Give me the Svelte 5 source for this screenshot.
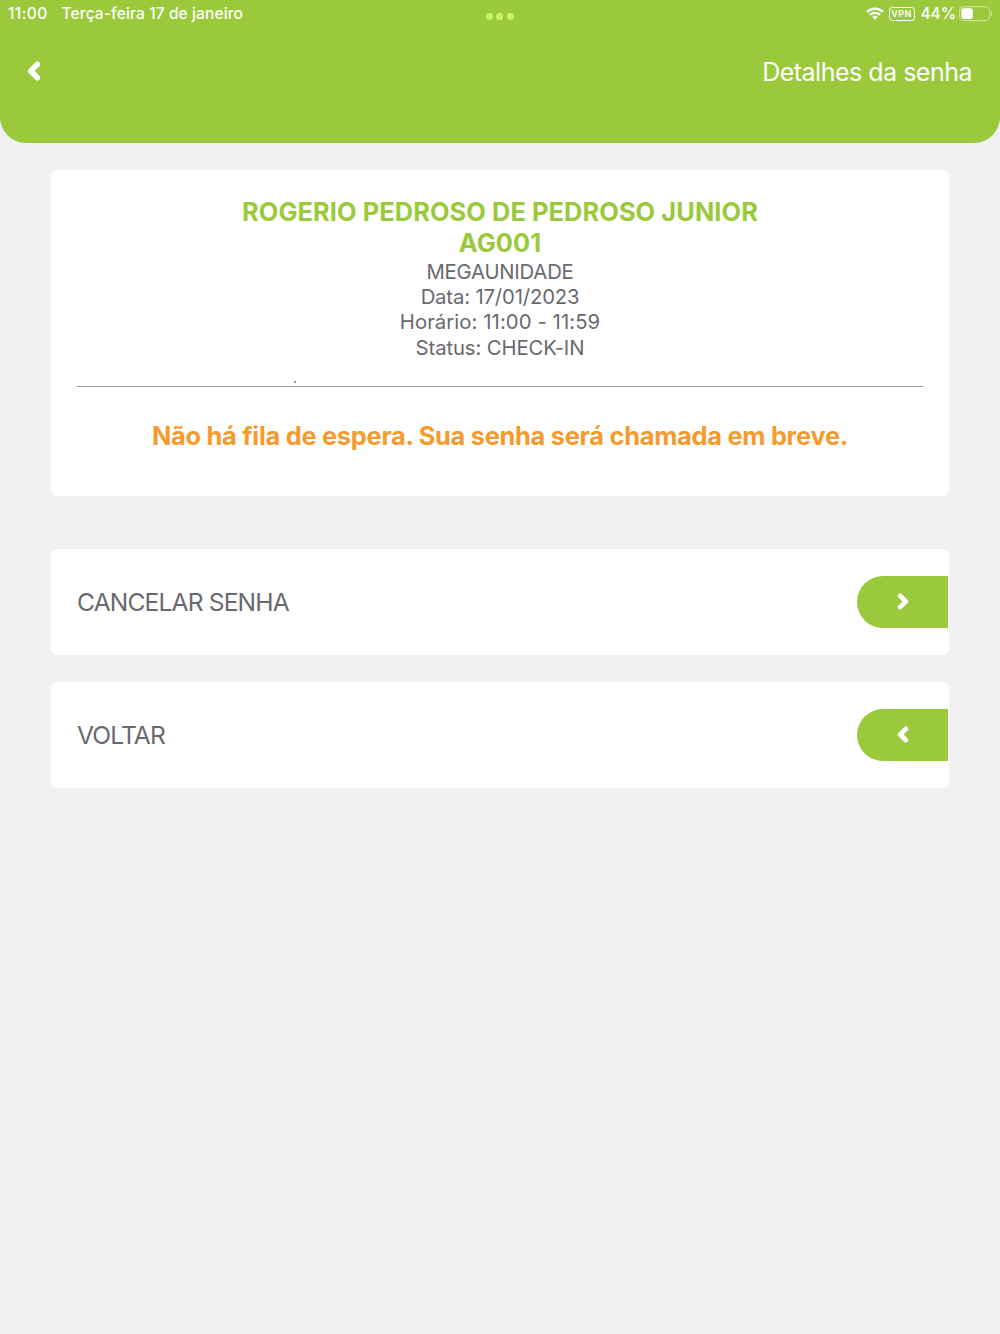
<script>
    let ticket = {
        name: 'ROGERIO PEDROSO DE PEDROSO JUNIOR',
        code: 'AG001',
        lines: [
            { text: 'MEGAUNIDADE', spacing: -0.2 },
            { text: 'Data: 17/01/2023', spacing: -0.15 },
            { text: 'Horário: 11:00 - 11:59', spacing: 0.08 },
            { text: 'Status: CHECK-IN', spacing: -0.1 }
        ]
    };

    let actions = [
        { id: 'cancel', label: 'CANCELAR SENHA', direction: 'right' },
        { id: 'back', label: 'VOLTAR', direction: 'left' }
    ];
</script>

<svelte:head>
    <title>Detalhes da senha</title>
</svelte:head>

{#snippet chevron(direction)}
    <svg class="chevron" viewBox="0 0 14 20" fill="none" stroke="#fff" stroke-width="5.5" stroke-linecap="round" stroke-linejoin="round">
        {#if direction === 'left'}
            <path d="M10.4 3.3 L3.7 10 L10.4 16.7" />
        {:else}
            <path d="M3.6 3.3 L10.3 10 L3.6 16.7" />
        {/if}
    </svg>
{/snippet}

<div class="screen">
    <header>
        <div class="status-bar">
            <div class="side">
                <span class="time">11:00</span>
                <span class="date">Terça-feira 17 de janeiro</span>
            </div>
            <div class="dots"><i></i><i></i><i></i></div>
            <div class="side right">
                <svg class="wifi" width="18" height="13" viewBox="0 0 18 13" fill="none" stroke="#fff" stroke-width="2.3">
                    <path d="M1 4.9 A11.4 11.4 0 0 1 17 4.9" />
                    <path d="M3.9 7.9 A7.3 7.3 0 0 1 14.1 7.9" />
                    <path d="M9 12.8 L6.3 10.1 A3.9 3.9 0 0 1 11.7 10.1 Z" fill="#fff" stroke="none" />
                </svg>
                <span class="vpn">VPN</span>
                <span class="percent">44%</span>
                <svg class="battery" width="34" height="16" viewBox="0 0 34 16">
                    <rect x="0.6" y="0.6" width="30" height="14" rx="4.2" fill="none" stroke="#fff" stroke-opacity="0.45" stroke-width="1.1" />
                    <rect x="2.3" y="2.3" width="11.6" height="10.6" rx="2.4" fill="#fff" />
                    <path d="M31.9 5.2 C34 6 34 9.2 31.9 10 Z" fill="#fff" fill-opacity="0.5" />
                </svg>
            </div>
        </div>
        <nav>
            <button class="back" aria-label="Voltar">{@render chevron('left')}</button>
            <h1>Detalhes da senha</h1>
        </nav>
    </header>

    <main>
        <section class="card ticket">
            <h2>{ticket.name}</h2>
            <h2>{ticket.code}</h2>
            {#each ticket.lines as line}
                <p style="letter-spacing: {line.spacing}px">{line.text}</p>
            {/each}
            <div class="divider"><i class="speck"></i></div>
            <strong>Não há fila de espera. Sua senha será chamada em breve.</strong>
        </section>

        {#each actions as action (action.id)}
            <div class="card action">
                <span>{action.label}</span>
                <button class="pill" aria-label={action.label}>{@render chevron(action.direction)}</button>
            </div>
        {/each}
    </main>
</div>

<style>
    :global(body) {
        background: #f1f1f1;
    }

    .screen {
        min-height: 1334px;
        background: #f1f1f1;
        color: #69696e;
        font-family: Inter, "Liberation Sans", sans-serif;
    }

    h1, h2, p {
        margin: 0;
        font-weight: 400;
    }

    button {
        display: flex;
        align-items: center;
        justify-content: center;
        padding: 0;
        border: 0;
        background: none;
    }

    header {
        height: 143px;
        box-sizing: border-box;
        background: #9aca3c;
        border-radius: 0 0 26px 26px;
        color: #fff;
    }

    .status-bar {
        display: flex;
        align-items: center;
        height: 27px;
        padding: 0 7px 0 8px;
        font-size: 15.5px;
        font-weight: 500;
    }

    .side {
        display: flex;
        flex: 1;
        align-items: center;
        white-space: nowrap;
    }

    .right {
        justify-content: flex-end;
    }

    .time {
        letter-spacing: 0.4px;
    }

    .date {
        margin-left: 14px;
        letter-spacing: 0.12px;
    }

    .dots {
        display: flex;
        gap: 3.5px;
        padding: 6px 2px 0 0;
    }

    .dots i {
        width: 7px;
        height: 7px;
        border-radius: 50%;
        background: #c6f368;
    }

    .vpn {
        box-sizing: border-box;
        width: 26px;
        height: 14px;
        margin: 0 6px 0 5px;
        border: 1.3px solid #fff;
        border-radius: 3.5px;
        font-size: 9px;
        font-weight: 600;
        line-height: 12px;
        letter-spacing: 0.4px;
        text-align: center;
    }

    .percent {
        letter-spacing: -0.1px;
    }

    .battery {
        margin-left: 3px;
    }

    nav {
        display: flex;
        align-items: center;
        justify-content: space-between;
        height: 89px;
        padding: 0 28px 0 27px;
    }

    h1 {
        font-size: 25px;
        letter-spacing: -0.5px;
    }

    .chevron {
        width: 14px;
        height: 20px;
        margin-bottom: 1px;
    }

    main {
        padding: 27px 51px 0;
    }

    .card {
        background: #fff;
        border-radius: 6px;
    }

    .ticket {
        box-sizing: border-box;
        height: 326px;
        padding: 26px 26px 0;
        margin-bottom: 53px;
        text-align: center;
    }

    h2 {
        color: #9aca3c;
        font-size: 25.4px;
        font-weight: 700;
        line-height: 31.3px;
        letter-spacing: 0.08px;
        white-space: nowrap;
    }

    .ticket p {
        font-size: 20.3px;
        line-height: 25.4px;
    }

    .divider {
        position: relative;
        height: 1px;
        margin: 25.4px 0 33px;
        background: #9a9a9a;
    }

    .speck {
        position: absolute;
        left: 217px;
        top: -5px;
        width: 2px;
        height: 2px;
        background: #999;
    }

    strong {
        display: block;
        color: #f59b2d;
        font-size: 25.4px;
        font-weight: 700;
        line-height: 32px;
        letter-spacing: -0.28px;
        white-space: nowrap;
    }

    .action {
        display: flex;
        align-items: center;
        justify-content: space-between;
        height: 106px;
        margin-bottom: 27px;
        padding: 0 1px 0 26px;
        font-size: 24.6px;
        letter-spacing: -0.85px;
    }

    .pill {
        width: 91px;
        height: 52px;
        border-radius: 26px 0 0 26px;
        background: #9aca3c;
    }

    .pill .chevron {
        width: 12px;
        height: 17px;
    }
</style>
